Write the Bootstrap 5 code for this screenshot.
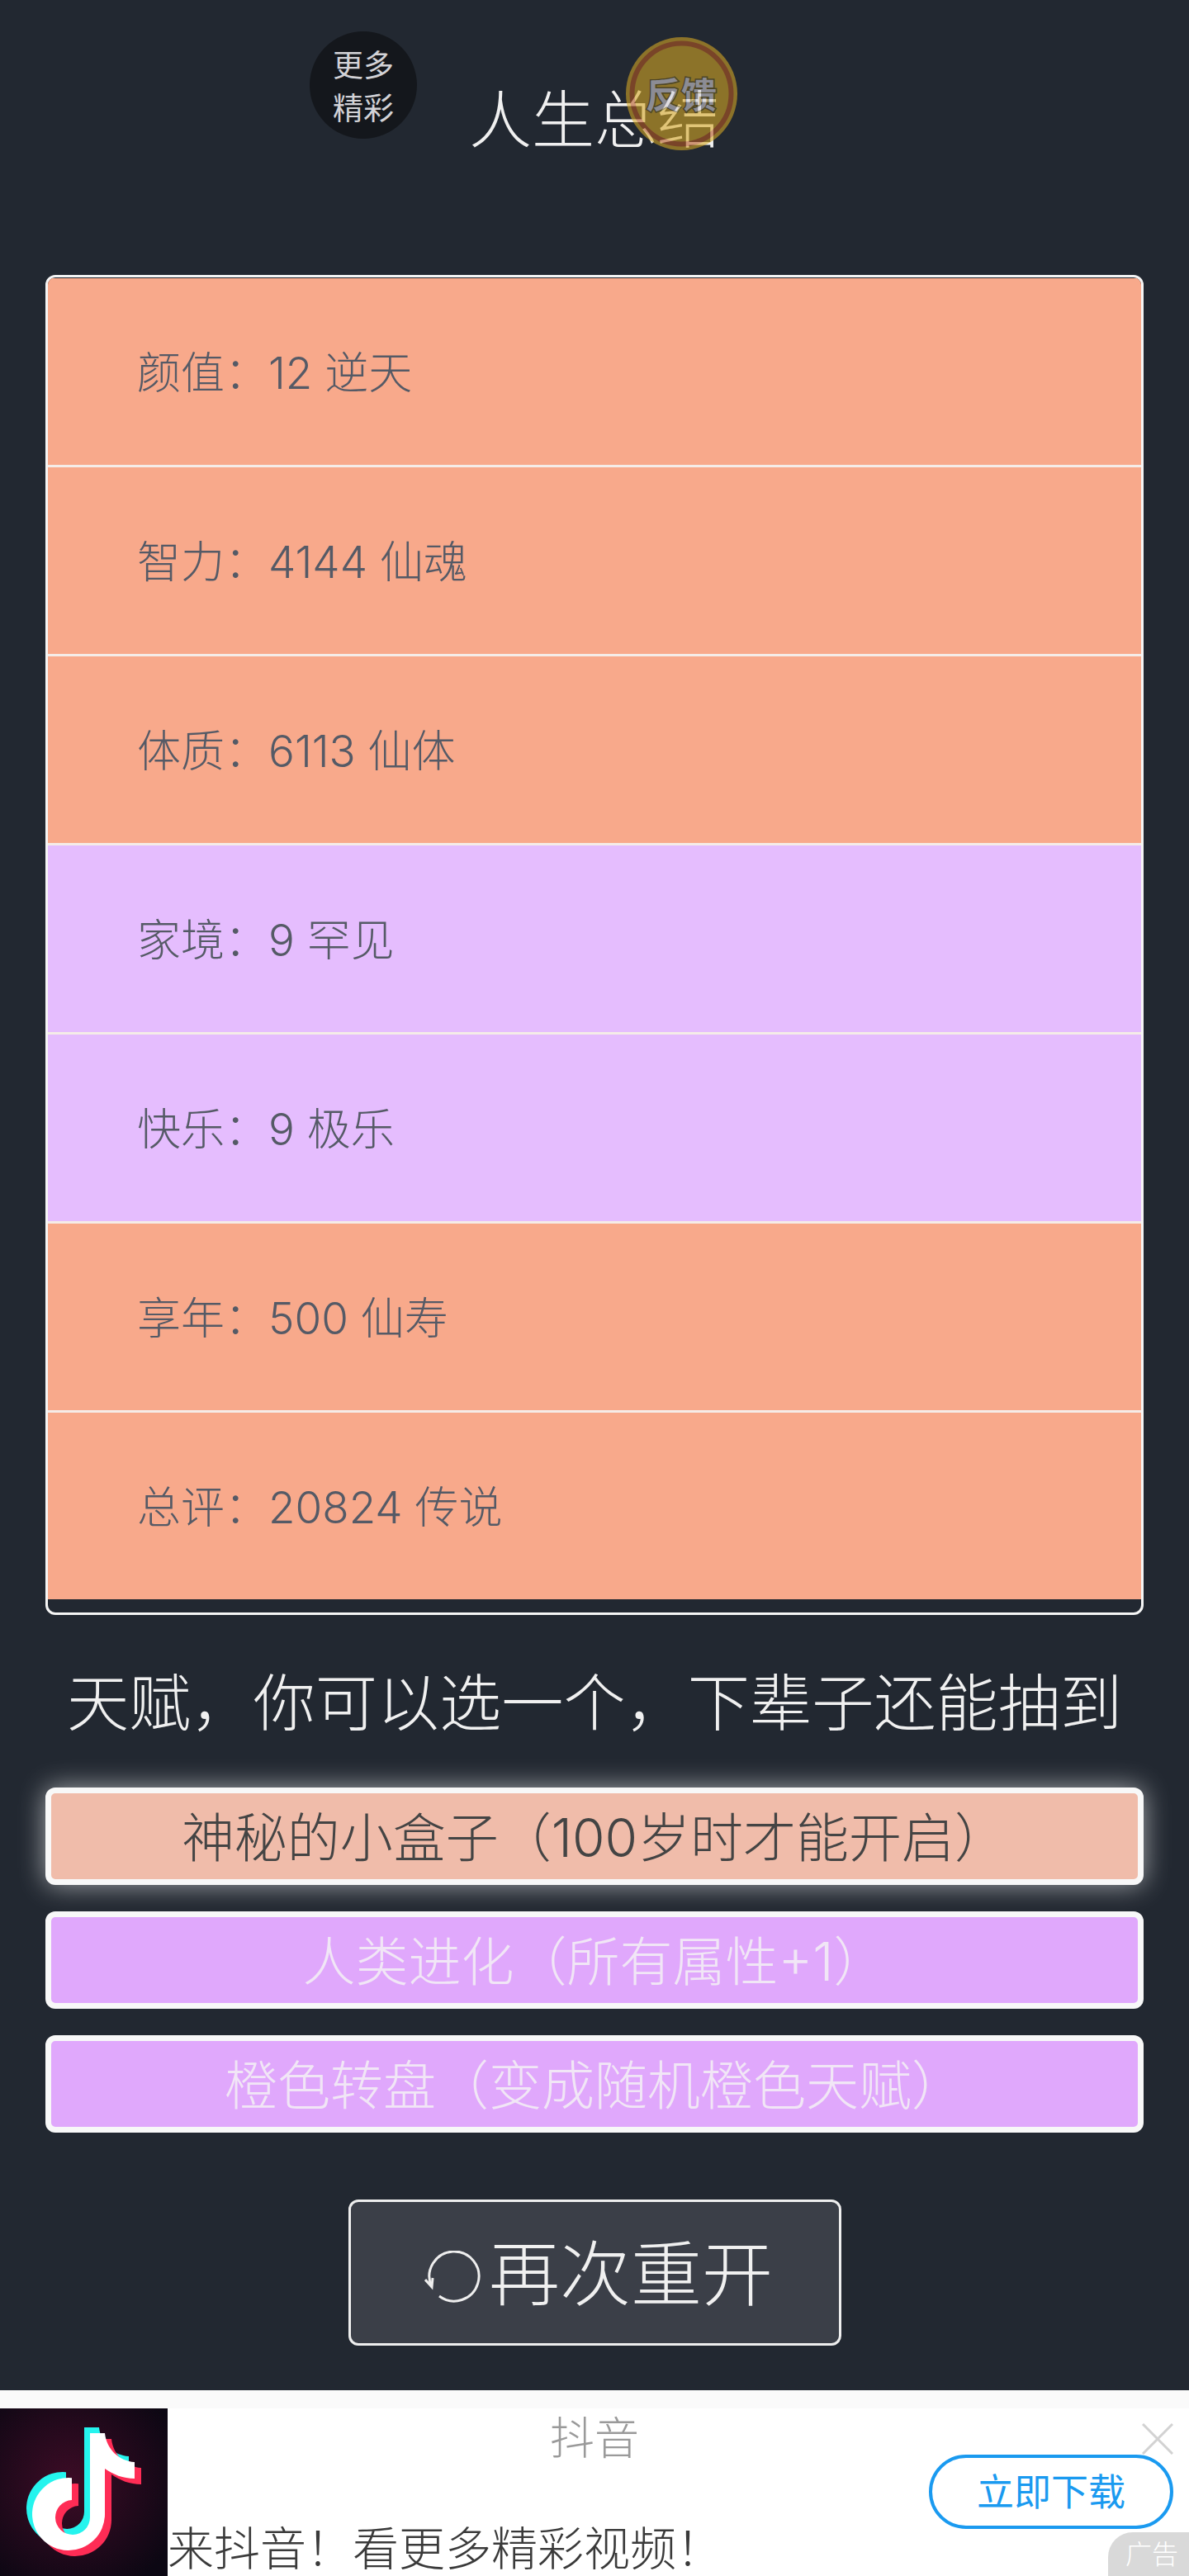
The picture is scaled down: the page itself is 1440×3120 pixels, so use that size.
<!DOCTYPE html>
<html lang="zh-CN">
<head>
    <meta charset="UTF-8">
    <meta name="viewport" content="width=device-width, initial-scale=1.0">
    <title>人生总结</title>
    <link href="https://cdn.jsdelivr.net/npm/bootstrap@5.3.0/dist/css/bootstrap.min.css" rel="stylesheet">
    <style>
        html, body {
            height: 3120px;
            overflow: hidden;
        }
        body {
            background-color: #222831;
            font-family: Inter, "Noto Sans CJK SC", sans-serif;
            font-weight: 300;
        }
        .page-wrap {
            height: 2895px;
            padding: 0 55px;
        }
        .page-title {
            margin: 0;
            height: 333px;
            padding-top: 100px;
            font-size: 76px;
            line-height: 90px;
            font-weight: 300;
            color: #f0f0f0;
            text-align: center;
        }
        .float-more {
            top: 38px;
            left: 375px;
            width: 130px;
            height: 130px;
            padding-top: 5px;
            background: #14171c;
            color: #d2d2d6;
            font-size: 37px;
            line-height: 52px;
            font-weight: 400;
        }
        .float-coin {
            top: 45px;
            left: 758px;
            width: 135px;
            height: 137px;
            opacity: .59;
        }
        .coin-label {
            font-size: 43px;
            font-weight: 700;
            fill: #d6d2d9;
            stroke: #6b5a20;
            stroke-width: 3px;
            paint-order: stroke;
        }
        .summary-panel {
            height: 1623px;
            border: 3px solid #f5f5f5;
            border-radius: 12px;
            padding-top: 1px;
            overflow: hidden;
        }
        .summary-row {
            height: 226px;
            padding-left: 108px;
            padding-top: 6px;
            font-size: 53px;
            color: #555a66;
        }
        .summary-row + .summary-row {
            height: 229px;
            padding-top: 6px;
            border-top: 3px solid #f5ece8;
        }
        .tone-orange { background: #f8a98b; }
        .tone-purple { background: #e5bdfe; }
        .choice-title {
            height: 209px;
            padding-top: 6px;
            font-size: 75.2px;
            color: #f0f0f0;
            margin: 0;
        }
        .choice-list {
            gap: 32px;
        }
        .talent-item {
            height: 118px;
            padding-top: 4px;
            border: 7px solid #f8f8f8;
            border-radius: 12px;
            font-size: 64px;
            line-height: 1;
        }
        .talent-picked {
            background: #f0bcaa;
            color: #444;
            box-shadow: 0 0 32px rgba(255, 255, 255, .6);
        }
        .talent-open {
            background: #e0a8fc;
            color: #f1e6f6;
        }
        .restart-btn {
            width: 597px;
            height: 177px;
            margin: 81px auto 0;
            padding: 5px 0 0 10px;
            background: #3b3f48;
            border: 3px solid #eee;
            border-radius: 12px;
            color: #f0f0f0;
            font-size: 86px;
            font-weight: 300;
            line-height: 1;
        }
        .restart-btn:hover {
            background: #3b3f48;
            color: #f0f0f0;
            border-color: #eee;
        }
        .restart-icon {
            width: 70px;
            height: 66px;
            margin-top: 8px;
            margin-right: 8px;
        }
        .ad-box {
            height: 225px;
            background: #fff;
        }
        .ad-band {
            height: 22px;
            background: #fafafa;
        }
        .ad-body {
            display: grid;
            grid-template-columns: 203px 1fr;
            grid-template-rows: 203px;
        }
        .ad-logo {
            grid-column: 1;
            grid-row: 1;
            width: 203px;
            height: 203px;
        }
        .ad-name {
            grid-column: 1 / 3;
            grid-row: 1;
            padding-top: 2px;
            font-size: 54px;
            line-height: 70px;
            color: #9a9a9a;
            text-align: center;
        }
        .ad-copy {
            grid-column: 2;
            grid-row: 1;
            align-self: end;
            padding-left: 0;
            font-size: 56px;
            line-height: 66px;
            color: #3a3a3a;
            white-space: nowrap;
        }
        .ad-pill {
            grid-column: 2;
            grid-row: 1;
            align-self: end;
            justify-self: end;
            width: 296px;
            height: 90px;
            margin: 0 19px 57px 0;
            padding: 0;
            background: #fff;
            border: 4px solid #1a9af0;
            border-radius: 45px;
            color: #1a9af0;
            font-size: 45px;
            line-height: 1;
            position: relative;
        }
        .ad-close {
            right: 19px;
            top: 40px;
            width: 38px;
            height: 38px;
        }
        .ad-tag {
            right: 0;
            bottom: 0;
            width: 98px;
            height: 53px;
            padding-left: 8px;
            background: #d9d9d9;
            border-top-left-radius: 30px;
            color: #fff;
            font-size: 32px;
            line-height: 1;
        }
    </style>
</head>
<body class="position-relative">
    <div class="page-wrap">
        <h1 class="page-title">人生总结</h1>

        <!-- 浮动按钮 -->
        <div class="float-more position-absolute rounded-circle d-flex flex-column align-items-center justify-content-center">
            <span>更多</span>
            <span>精彩</span>
        </div>
        <svg class="float-coin position-absolute" viewBox="0 0 135 137">
            <ellipse cx="67.5" cy="68.5" rx="67.5" ry="68.5" fill="#d7a825"/>
            <ellipse cx="67.5" cy="68.5" rx="60" ry="61" fill="#d7a825" stroke="#b75822" stroke-width="6"/>
            <text class="coin-label" x="67" y="86" text-anchor="middle">反馈</text>
        </svg>

        <!-- 属性总结 -->
        <div class="summary-panel">
            <div class="summary-row tone-orange d-flex align-items-center">颜值：12 逆天</div>
            <div class="summary-row tone-orange d-flex align-items-center">智力：4144 仙魂</div>
            <div class="summary-row tone-orange d-flex align-items-center">体质：6113 仙体</div>
            <div class="summary-row tone-purple d-flex align-items-center">家境：9 罕见</div>
            <div class="summary-row tone-purple d-flex align-items-center">快乐：9 极乐</div>
            <div class="summary-row tone-orange d-flex align-items-center">享年：500 仙寿</div>
            <div class="summary-row tone-orange d-flex align-items-center">总评：20824 传说</div>
        </div>

        <h2 class="choice-title d-flex align-items-center justify-content-center fw-light">天赋，你可以选一个，下辈子还能抽到</h2>

        <div class="choice-list d-flex flex-column">
            <div class="talent-item talent-picked d-flex align-items-center justify-content-center">神秘的小盒子（100岁时才能开启）</div>
            <div class="talent-item talent-open d-flex align-items-center justify-content-center">人类进化（所有属性+1）</div>
            <div class="talent-item talent-open d-flex align-items-center justify-content-center">橙色转盘（变成随机橙色天赋）</div>
        </div>

        <button type="button" class="btn restart-btn d-flex align-items-center justify-content-center">
            <svg class="restart-icon" viewBox="0 0 70 66" fill="none" stroke="#eee" stroke-width="3">
                <path d="M18 55A30 30 0 1 0 8.5 43"/>
                <path d="M1 35L9 44L10 33"/>
            </svg>
            <span>再次重开</span>
        </button>
    </div>

    <!-- 广告 -->
    <div class="ad-box position-relative">
        <div class="ad-band"></div>
        <div class="ad-body">
            <svg class="ad-logo" viewBox="0 0 203 203">
                <defs>
                    <radialGradient id="logoBg" cx="42%" cy="45%" r="70%">
                        <stop offset="0" stop-color="#3d0c26"/>
                        <stop offset="1" stop-color="#0c0713"/>
                    </radialGradient>
                    <path id="noteShape" d="M109 30H127C129 50 145 64 163 65V85C149 85 137 80 127 73V128A44 44 0 1 1 87 84.2V111A21 21 0 1 0 109 132Z"/>
                </defs>
                <rect width="203" height="203" fill="url(#logoBg)"/>
                <use href="#noteShape" fill="#25f4ee" transform="translate(-7 -7)"/>
                <use href="#noteShape" fill="#fe2c55" transform="translate(8 7)"/>
                <use href="#noteShape" fill="#fff"/>
            </svg>
            <div class="ad-name">抖音</div>
            <div class="ad-copy">来抖音！看更多精彩视频！</div>
            <button type="button" class="ad-pill d-flex align-items-center justify-content-center">立即下载</button>
        </div>
        <svg class="ad-close position-absolute" viewBox="0 0 38 38" stroke="#d2d2d2" stroke-width="3">
            <path d="M1 1L37 37M37 1L1 37"/>
        </svg>
        <div class="ad-tag position-absolute d-flex align-items-center justify-content-center">广告</div>
    </div>

    <script src="https://cdn.jsdelivr.net/npm/bootstrap@5.3.0/dist/js/bootstrap.bundle.min.js"></script>
</body>
</html>
